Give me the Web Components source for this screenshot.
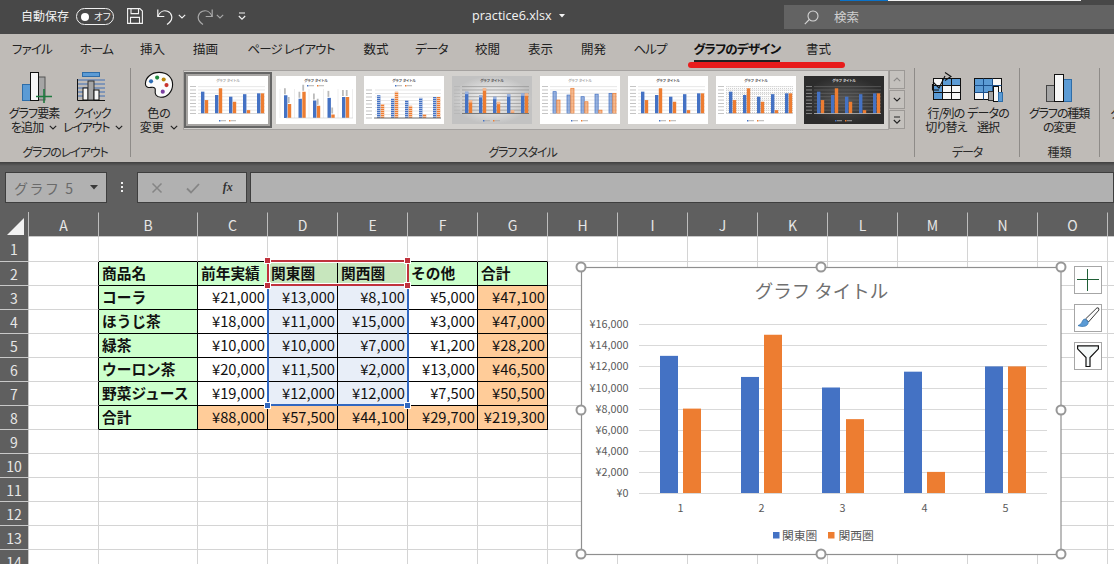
<!DOCTYPE html>
<html lang="ja">
<head>
<meta charset="utf-8">
<title>practice6.xlsx</title>
<style>
  html, body { margin: 0; width: 1114px; height: 564px; overflow: hidden; background: #fff; }
  body { font-family: "Noto Sans CJK JP", "Noto Sans", sans-serif; }
  svg { display: block; }
</style>
</head>
<body>
<xl-titlebar></xl-titlebar>
<xl-ribbon>
  <xl-group label="グラフのレイアウト" w="131" pad="5">
    <xl-rbtn w="58" ls="-.9" chev>
      <svg slot="icon" style="margin-left:6px" width="32" height="32" viewBox="0 0 32 32"><rect x="1.500" y="13.500" width="8" height="16" fill="#5b9bd5" stroke="#2e6da8"/><rect x="16" y="6" width="8" height="23" fill="#a5a5a5" stroke="#555"/><rect x="9.500" y="1.500" width="8" height="28" fill="#f7f7f7" stroke="#111"/><path d="M15 25.500h16M23 18v15" stroke="#1f7a3f" stroke-width="1.600" fill="none"/></svg>
      グラフ要素<br>を追加
    </xl-rbtn>
    <xl-rbtn w="58" ls="-1.200" chev>
      <svg slot="icon" width="32" height="32" viewBox="0 0 32 32"><rect x="6.500" y="1.500" width="17" height="4" fill="#5b9bd5" stroke="#2e6da8"/><path d="M2 9h27M2 13h27M2 17h27M2 21h27M2 25h27" stroke="#3f6fb5" fill="none"/><path d="M1.500 8v21.500H29" stroke="#111" fill="none"/><rect x="7" y="17" width="5" height="12" fill="#f7f7f7" stroke="#111"/><rect x="12" y="10" width="6" height="19" fill="#a5a5a5" stroke="#333"/><rect x="18" y="19" width="5" height="10" fill="#f7f7f7" stroke="#111"/></svg>
      クイック<br>レイアウト
    </xl-rbtn>
  </xl-group>
  <xl-group label="グラフ スタイル" w="784" pad="4">
    <xl-rbtn w="48" ls="0" chev>
      <svg slot="icon" width="30" height="30" viewBox="0 0 32 32"><path d="M16 1.500C8 1.500 1.500 7 1.500 13.500c0 3.500 3 4.500 6 4 3.500-.6 5 .7 4.500 3.500-.5 3 .5 7 6 7 7 0 12.500-6 12.500-13.500S25 1.500 16 1.500z" fill="#fbfbfb" stroke="#111" stroke-width="1.200"/><circle cx="7.500" cy="11" r="2.200" fill="#2e6db5"/><circle cx="14" cy="7" r="2.200" fill="#1e8a3c"/><circle cx="21" cy="9" r="2.200" fill="#b8860b"/><circle cx="24" cy="15" r="2.200" fill="#c8322b"/><circle cx="20" cy="22" r="2.200" fill="#7b3fa0"/></svg>
      色の<br>変更
    </xl-rbtn>
    <xl-gallery></xl-gallery>
  </xl-group>
  <xl-group label="データ" w="105" pad="10">
    <xl-rbtn w="42" ls="-.8">
      <svg slot="icon" width="32" height="32" viewBox="0 0 32 32"><rect x="3.500" y="7.500" width="27" height="21" fill="#f7f7f7" stroke="#111"/><path d="M12 8h18v7H12zM4 15h8v13H4z" fill="#5b9bd5"/><path d="M3.500 14.500h27M3.500 21.500h27M12.500 7.500v21M21.500 7.500v21" stroke="#111" fill="none"/><path d="M3 11l6 6 6-12M15 1.500l6 4-6 4M9 19H2.500v-6" fill="none" stroke="#111" stroke-width="1.100"/></svg>
      行/列の<br>切り替え
    </xl-rbtn>
    <xl-rbtn w="42" ls="-.9">
      <svg slot="icon" width="32" height="32" viewBox="0 0 32 32"><rect x="2.500" y="7.500" width="27" height="21" fill="#f7f7f7" stroke="#111"/><path d="M3 8h18v14H3z" fill="#5b9bd5"/><path d="M2.500 14.500h27M2.500 21.500h27M11.500 7.500v21M20.500 7.500v21" stroke="#1c4f8a" fill="none"/><rect x="16.500" y="20.500" width="5" height="9" fill="#a5a5a5" stroke="#333"/><rect x="21.500" y="15.500" width="5" height="15" fill="#f7f7f7" stroke="#111"/><rect x="26.500" y="21.500" width="4" height="9" fill="#5b9bd5" stroke="#2e6da8"/></svg>
      データの<br>選択
    </xl-rbtn>
  </xl-group>
  <xl-group label="種類" w="80" pad="3">
    <xl-rbtn w="72" ls="-1.100">
      <svg slot="icon" width="32" height="32" viewBox="0 0 32 32"><rect x="3.500" y="14.500" width="8" height="16" fill="#a5a5a5" stroke="#444"/><rect x="20.500" y="8.500" width="8" height="22" fill="#5b9bd5" stroke="#2e6da8"/><rect x="11.500" y="3.500" width="9" height="27" fill="#f7f7f7" stroke="#111"/></svg>
      グラフの種類<br>の変更
    </xl-rbtn>
  </xl-group>
  <xl-group label="" w="60" pad="5" last>
    <xl-rbtn w="50" ls="-.9">
      <svg slot="icon" width="32" height="32" viewBox="0 0 32 32"></svg>
      グラフの<br>移動
    </xl-rbtn>
  </xl-group>
</xl-ribbon>
<xl-formula></xl-formula>
<xl-sheet><xl-chart></xl-chart></xl-sheet>

<script>
var JP = '"Noto Sans CJK JP","Noto Sans",sans-serif';
var DATA = [[13, 8], [11, 15], [10, 7], [11.5, 2], [12, 12]];

function chev(color) {
  return '<svg class="chev" width="8" height="5" viewBox="0 0 8 5"><path d="M.8.8L4 4l3.200-3.200" fill="none" stroke="' + (color || '#222') + '" stroke-width="1.100"/></svg>';
}

class XlTitlebar extends HTMLElement {
  constructor() {
    super();
    this.attachShadow({ mode: 'open' }).innerHTML = `
    <style>
      :host { display: flex; align-items: center; height: 34px; background: #484848; color: #f4f4f4; font: 12.500px ${JP}; font-feature-settings: "palt"; position: relative; overflow: hidden; }
      .auto { margin: -3px 0 0 21px; width: 55px; white-space: nowrap; font-size: 12px; }
      .toggle { width: 38px; height: 17px; box-sizing: border-box; border: 1.500px solid #f0f0f0; border-radius: 9px; display: flex; align-items: center; padding-left: 4px; gap: 5px; font-size: 9.500px; line-height: 1; margin-top: -1px; }
      .toggle i { width: 8px; height: 8px; border-radius: 50%; background: #fff; }
      .qat { display: flex; align-items: center; margin-top: -2px; }
      .file { font: 12.600px "Open Sans", sans-serif; display: flex; align-items: center; gap: 7px; margin: -3px 0 0 226px; }
      .search { margin-left: auto; width: 330px; height: 24px; background: #636363; display: flex; align-items: center; color: #d0d0d0; }
      .search span { margin: -2px 0 0 15px; }
      .bar { position: absolute; top: 0; left: 840px; width: 241px; height: 1px; background: linear-gradient(90deg, #0a72c8 48px, #f2f2f2 48px); }
    </style>
    <div class="auto">自動保存</div>
    <div class="toggle"><i></i><span>オフ</span></div>
    <div class="qat">
      <svg style="margin-left:13px" width="16" height="16" viewBox="0 0 16 16" fill="none" stroke="#f4f4f4" stroke-width="1.100"><path d="M.6.6h12.300l2.500 2.500v12.300H.6z"/><path d="M4 .6v5h7.500v-5M3.500 15.400v-6h9v6"/></svg>
      <svg style="margin-left:14px" width="16" height="17" viewBox="0 0 16 17" fill="none" stroke="#f4f4f4" stroke-width="1.200"><path d="M.8 1.500v7h6.500"/><path d="M.8 8.500C3 3.500 7 2 10.500 3.300c4.500 1.700 5.500 7 2.800 10.200-.9 1.100-2 2-3.300 2.900"/></svg>
      <svg style="margin-left:5px" width="8" height="5" viewBox="0 0 8 5"><path d="M.8.8L4 4l3.200-3.200" fill="none" stroke="#f4f4f4" stroke-width="1.100"/></svg>
      <svg style="margin-left:11px" width="16" height="17" viewBox="0 0 16 17" fill="none" stroke="#a9a9a9" stroke-width="1.200"><path d="M15.200 1.500v7H8.700"/><path d="M15.200 8.500C13 3.500 9 2 5.500 3.300 1 5 0 10.300 2.700 13.500c.9 1.100 2 2 3.300 2.900"/></svg>
      <svg style="margin-left:3px" width="8" height="5" viewBox="0 0 8 5"><path d="M.8.8L4 4l3.200-3.200" fill="none" stroke="#a9a9a9" stroke-width="1.100"/></svg>
      <svg style="margin-left:14px" width="8" height="8" viewBox="0 0 8 8"><path d="M1 1h6" stroke="#f4f4f4" fill="none"/><path d="M.8 4L4 7.200 7.200 4" fill="none" stroke="#f4f4f4" stroke-width="1.100"/></svg>
    </div>
    <div class="file">practice6.xlsx<svg width="6" height="4" viewBox="0 0 6 4"><path d="M0 0h6L3 3.500z" fill="#f4f4f4"/></svg></div>
    <div class="search">
      <svg style="margin-left:20px" width="15" height="15" viewBox="0 0 15 15" fill="none" stroke="#d4d4d4" stroke-width="1.100"><circle cx="9" cy="6" r="5"/><path d="M5.300 9.500L.8 14.200"/></svg>
      <span>検索</span>
    </div>
    <div class="bar"></div>`;
  }
}

class XlRibbon extends HTMLElement {
  constructor() {
    super();
    var tabs = [['ファイル', 64, 1], ['ホーム', 65, 1], ['挿入', 47], ['描画', 59], ['ページ レイアウト', 112, 1], ['数式', 58], ['データ', 53, 1], ['校閲', 59], ['表示', 47], ['開発', 59], ['ヘルプ', 54, 1], ['グラフのデザイン', 120, 1], ['書式', 43]];
    var html = tabs.map(function (t) {
      return '<span class="tab' + (t[0] === 'グラフのデザイン' ? ' on' : '') + (t[2] ? ' kana' : '') + '" style="width:' + t[1] + 'px">' + t[0] + '</span>';
    }).join('');
    this.attachShadow({ mode: 'open' }).innerHTML = `
    <style>
      :host { display: block; height: 128px; background: #bfbbb7; color: #222; font: 12.500px ${JP}; font-feature-settings: "palt"; position: relative; }
      .tabs { display: flex; height: 34px; white-space: nowrap; }
      .tab { display: flex; justify-content: center; align-items: center; height: 28px; padding-top: 1px; box-sizing: border-box; position: relative; flex: none; }
      .kana { letter-spacing: -.8px; }
      .tab.on { font-weight: 700; color: #111; letter-spacing: -.8px; }
      .tab.on::after { content: ""; position: absolute; left: 17px; right: 17px; top: 26px; height: 2px; background: #222; }
      .body { display: flex; height: 94px; }
      .mark { position: absolute; left: 688px; top: 28px; width: 157px; height: 6px; border-radius: 3px; background: #e81c1c; }
    </style>
    <div class="tabs">${html}</div>
    <div class="body"><slot></slot></div>
    <div class="mark"></div>`;
  }
}

class XlGroup extends HTMLElement {
  constructor() {
    super();
    var w = this.getAttribute('w'), pad = this.getAttribute('pad');
    var last = this.hasAttribute('last');
    var label = this.getAttribute('label');
    var ls = /[ァ-ヶー]/.test(label) ? '-1.100px' : '0';
    this.attachShadow({ mode: 'open' }).innerHTML = `
    <style>
      :host { display: flex; flex-direction: column; box-sizing: border-box; width: ${w}px; height: 89px; flex: none; ${last ? '' : 'border-right: 1px solid #8e8b88;'} position: relative; }
      .in { display: flex; align-items: flex-start; flex: 1; padding-left: ${pad}px; }
      .lab { text-align: center; font-size: 12px; line-height: 16px; color: #2a2a2a; margin-bottom: -3px; letter-spacing: ${ls}; }
    </style>
    <div class="in"><slot></slot></div>
    <div class="lab">${label}</div>`;
  }
}

class XlRbtn extends HTMLElement {
  constructor() {
    super();
    var w = this.getAttribute('w');
    var ls = this.getAttribute('ls') || '0';
    this.attachShadow({ mode: 'open' }).innerHTML = `
    <style>
      :host { display: block; width: ${w}px; flex: none; text-align: center; font-size: 12px; line-height: 14px; letter-spacing: ${ls}px; color: #222; white-space: nowrap; }
      .ic { height: 35px; display: flex; justify-content: center; padding-top: 3px; }
      .chev { display: inline-block; margin-left: 4px; vertical-align: 2px; }
    </style>
    <div class="ic"><slot name="icon"></slot></div>
    <div><slot></slot>${this.hasAttribute('chev') ? chev() : ''}</div>`;
  }
}

class XlGallery extends HTMLElement {
  constructor() {
    super();
    var thumbs = '';
    for (var i = 1; i <= 8; i++) thumbs += '<xl-thumb v="' + i + '"' + (i === 1 ? ' sel' : '') + '></xl-thumb>';
    this.attachShadow({ mode: 'open' }).innerHTML = `
    <style>
      :host { display: flex; flex: none; height: 60px; margin-top: 2px; }
      .list { display: flex; padding: 1px 0 0 0; width: 706px; box-sizing: border-box; background: #d3d1ce; border: 1px solid #a5a2a0; height: 60px; }
      .sb { display: flex; flex-direction: column; width: 16px; }
      .sb div { flex: 1; box-sizing: border-box; border: 1px solid #9c9996; display: flex; align-items: center; justify-content: center; background: #c4c1bd; margin-bottom: 1px; }
    </style>
    <div class="list">${thumbs}</div>
    <div class="sb">
      <div><svg width="8" height="5" viewBox="0 0 8 5"><path d="M.8 4.200L4 1l3.200 3.200" fill="none" stroke="#8a8886" stroke-width="1.100"/></svg></div>
      <div><svg width="8" height="5" viewBox="0 0 8 5"><path d="M.8.8L4 4l3.200-3.200" fill="none" stroke="#222" stroke-width="1.100"/></svg></div>
      <div><svg width="8" height="8" viewBox="0 0 8 8"><path d="M1 1h6" stroke="#222" fill="none"/><path d="M.8 4L4 7.200 7.200 4" fill="none" stroke="#222" stroke-width="1.100"/></svg></div>
    </div>`;
  }
}

class XlThumb extends HTMLElement {
  constructor() {
    super();
    var v = +this.getAttribute('v');
    var sel = this.hasAttribute('sel');
    this.attachShadow({ mode: 'open' }).innerHTML = `
    <style>
      :host { display: block; width: 88px; height: 56px; box-sizing: border-box; padding: ${sel ? 2 : 4}px; flex: none; ${sel ? 'border: 2px solid #666; background: #a7a5a3;' : ''} }
      svg { display: block; width: 80px; height: 48px; }
    </style>` + this.draw(v);
  }
  draw(v) {
    var dark = v === 8, s = '';
    var blue = '#4472c4', or = '#ed7d31';
    var bg = dark ? 'url(#dk)' : v === 4 ? 'url(#gr)' : '#fff';
    s += '<defs><radialGradient id="dk"><stop offset="0" stop-color="#555"/><stop offset="1" stop-color="#2c2c2c"/></radialGradient>' +
      '<radialGradient id="gr"><stop offset="0" stop-color="#fff"/><stop offset="1" stop-color="#c2c2c2"/></radialGradient>' +
      '<pattern id="st" width="2" height="2" patternUnits="userSpaceOnUse"><rect width="2" height="1" fill="#fff" opacity=".55"/></pattern>' +
      '<pattern id="ht" width="2" height="2" patternUnits="userSpaceOnUse"><rect width="1" height="1" fill="#cfcfcf"/></pattern></defs>';
    s += '<rect width="80" height="48" fill="' + bg + '"/>';
    var base = v === 2 || v === 3 ? 42 : 37.5;
    var unit = v === 2 || v === 3 ? 1.75 : 1.68;
    var x0 = v === 2 ? 8 : 13, step = v === 2 ? 14.5 : 14;
    var tc = dark ? '#ddd' : v === 1 || v === 5 ? '#aaa' : '#555';
    s += '<text x="40" y="6" text-anchor="middle" font-size="3.600" font-weight="700" fill="' + tc + '" font-family=\'' + JP.replace(/"/g, '') + '\'>グラフ タイトル</text>';
    if (v === 7) s += '<rect x="10" y="9" width="68" height="29" fill="url(#ht)"/>';
    if (v === 2) {
      for (var k = 0; k <= 5; k++) s += '<path d="M' + (4 + k * 14.5) + ' 13v29" stroke="#ddd" stroke-width=".5"/>';
    } else {
      for (var g = 0; g <= 8; g++) {
        var y = base - g * 2 * unit;
        s += '<path d="M' + (v === 3 ? 11 : 10) + ' ' + y + 'H77" stroke="' + (dark ? '#666' : v === 4 ? '#8f8f8f' : '#ddd') + '" stroke-width=".7"/>';
        s += '<rect x="2" y="' + (y - .4) + '" width="6" height=".8" fill="' + (dark ? '#999' : '#b5b5b5') + '"/>';
      }
    }
    DATA.forEach(function (d, i) {
      var x = x0 + i * step;
      d.forEach(function (val, j) {
        var h = val * unit, bx = x + j * 3.8, c = j ? or : blue;
        if (v === 5) {
          s += '<rect x="' + bx + '" y="' + (base - h) + '" width="3.200" height="' + h + '" fill="' + c + '" fill-opacity=".55" stroke="' + c + '" stroke-width=".7"/>';
        } else {
          s += '<rect x="' + bx + '" y="' + (base - h) + '" width="3.400" height="' + h + '" fill="' + c + '"/>';
          if (v === 3) s += '<rect x="' + bx + '" y="' + (base - h) + '" width="3.400" height="' + h + '" fill="url(#st)"/>';
          if (v === 4) s += '<rect x="' + bx + '" y="' + (base - h) + '" width="3.400" height="2.500" fill="#fff" opacity=".45"/>';
          if (v === 2) s += '<rect x="' + bx + '" y="' + (base - h - 7) + '" width="1.800" height="6" fill="#bbb"/>';
        }
      });
    });
    s += '<path d="M10 ' + base + 'H77" stroke="' + (v === 3 || v === 4 ? '#777' : '#ccc') + '" stroke-width="' + (v === 3 || v === 4 ? 1 : .6) + '"/>';
    var ly = v === 2 || v === 3 ? 10 : 45;
    s += '<rect x="31" y="' + (ly - 1) + '" width="1.500" height="1.500" fill="' + blue + '"/><rect x="33" y="' + (ly - .7) + '" width="5" height=".9" fill="#aaa"/>';
    s += '<rect x="41" y="' + (ly - 1) + '" width="1.500" height="1.500" fill="' + or + '"/><rect x="43" y="' + (ly - .7) + '" width="5" height=".9" fill="#aaa"/>';
    return '<svg viewBox="0 0 80 48">' + s + '</svg>';
  }
}

class XlFormula extends HTMLElement {
  constructor() {
    super();
    this.attachShadow({ mode: 'open' }).innerHTML = `
    <style>
      :host { display: flex; align-items: flex-start; height: 50px; box-sizing: border-box; padding: 10px 0 0 5px; background: linear-gradient(#3f3f3f, #5f5f5f 4px); font: 14px ${JP}; }
      .box { background: #b1b1b1; border: 1px solid #3e3e3e; height: 31px; box-sizing: border-box; display: flex; align-items: center; }
      .name { width: 102px; padding: 0 8px 0 8px; justify-content: space-between; color: #6a6a6a; font-size: 14px; letter-spacing: 1.500px; }
      .dots { width: 30px; display: flex; justify-content: center; padding-top: 10px; }
      .btns { width: 110px; justify-content: space-around; padding: 0 2px; color: #333; font: italic 700 12px "Liberation Serif", serif; }
      .fx { flex: 1; margin-left: 3px; }
    </style>
    <div class="box name"><span>グラフ 5</span><svg width="8" height="5" viewBox="0 0 8 5"><path d="M0 0h8L4 4.500z" fill="#3a3a3a"/></svg></div>
    <div class="dots"><svg width="2" height="10" viewBox="0 0 2 10"><path d="M0 0h2v2H0zM0 4h2v2H0zM0 8h2v2H0z" fill="#eee"/></svg></div>
    <div class="box btns">
      <svg width="12" height="12" viewBox="0 0 12 12"><path d="M1.500 1.500l9 9M10.500 1.500l-9 9" stroke="#858585" stroke-width="1.500"/></svg>
      <svg width="14" height="12" viewBox="0 0 14 12"><path d="M1 6.500l4 4L13 2" fill="none" stroke="#858585" stroke-width="1.800"/></svg>
      <span>fx</span>
    </div>
    <div class="box fx"></div>`;
  }
}

class XlSheet extends HTMLElement {
  constructor() {
    super();
    var cols = 'ABCDEFGHIJKLMNO'.split('').concat(['']);
    var rows = {
      2: ['商品名', '前年実績', '関東圏', '関西圏', 'その他', '合計'],
      3: ['コーラ', '¥21,000', '¥13,000', '¥8,100', '¥5,000', '¥47,100'],
      4: ['ほうじ茶', '¥18,000', '¥11,000', '¥15,000', '¥3,000', '¥47,000'],
      5: ['緑茶', '¥10,000', '¥10,000', '¥7,000', '¥1,200', '¥28,200'],
      6: ['ウーロン茶', '¥20,000', '¥11,500', '¥2,000', '¥13,000', '¥46,500'],
      7: ['野菜ジュース', '¥19,000', '¥12,000', '¥12,000', '¥7,500', '¥50,500'],
      8: ['合計', '¥88,000', '¥57,500', '¥44,100', '¥29,700', '¥219,300']
    };
    var html = '<div class="corner"><svg width="17" height="17" viewBox="0 0 17 17"><path d="M17 0v17H0z" fill="#f2f2f2"/></svg></div>';
    cols.forEach(function (c) { html += '<div class="ch">' + c + '</div>'; });
    for (var r = 1; r <= 14; r++) {
      html += '<div class="rh">' + r + '</div>';
      for (var c = 0; c < cols.length; c++) {
        var cls = 'c', txt = '', inT = rows[r] && c >= 1 && c <= 6;
        if (r === 1 && c >= 1 && c <= 6) cls += ' bb';
        if (rows[r] && c === 0) cls += ' br';
        if (inT) {
          cls += ' bb br';
          txt = rows[r][c - 1];
          if (r === 2) cls += (c === 3 || c === 4) ? ' sh' : ' hd';
          else if (c === 1) cls += ' hd';
          else if (r === 8 || c === 6) cls += ' to';
          else if (c === 3 || c === 4) cls += ' se';
          cls += (r === 2 || c === 1) ? ' b' : ' n';
        }
        html += '<div class="' + cls + '">' + txt + '</div>';
      }
    }
    var hs = [[267.7, 48.5, 'r'], [407.7, 48.5, 'r'], [267.7, 73, 'r'], [407.7, 73, 'r'], [267.7, 193.5, 'u'], [407.7, 193.5, 'u']]
      .map(function (h) { return '<i class="hd-' + h[2] + '" style="left:' + (h[0] - 3.5) + 'px;top:' + (h[1] - 3.5) + 'px"></i>'; }).join('');
    this.attachShadow({ mode: 'open' }).innerHTML = `
    <style>
      :host { display: block; position: relative; height: 352px; overflow: hidden; font: 14.700px ${JP}; color: #111; background: #fff; }
      .g { display: grid; grid-template-columns: 29px 70px 99px repeat(14, 70px); grid-template-rows: 25px 25px repeat(13, 24px); width: 1200px; }
      .corner { background: #5f5f5f; display: flex; align-items: flex-end; justify-content: flex-end; padding: 0 4px 2px 0; border-right: 1px solid #bdbdbd; box-sizing: border-box; }
      .ch { background: #5f5f5f; color: #e6e6e6; font-size: 14px; display: flex; align-items: center; justify-content: center; border-right: 1px solid #bdbdbd; border-top: 1px solid #5f5f5f; border-bottom: 1px solid #c8c8c8; box-sizing: border-box; }
      .rh { background: #5f5f5f; color: #e6e6e6; font-size: 14px; display: flex; align-items: center; justify-content: center; border-bottom: 1px solid #c8c8c8; border-right: 1px solid #c8c8c8; box-sizing: border-box; }
      .c { box-sizing: border-box; border-right: 1px solid #d4d4d4; border-bottom: 1px solid #d4d4d4; display: flex; align-items: center; white-space: nowrap; line-height: 1; overflow: hidden; }
      .bb { border-bottom-color: #000; }
      .br { border-right-color: #000; }
      .hd { background: #ccffcc; }
      .sh { background: #c7e6bd; }
      .se { background: #e8eef8; }
      .to { background: #ffcc99; }
      .b { font-weight: 700; padding-left: 3px; }
      .n { justify-content: flex-end; padding-right: 2px; }
      .sel { position: absolute; box-sizing: border-box; outline: 1px solid #fff; outline-offset: -3px; }
      .red { left: 267px; top: 48px; width: 142px; height: 26px; border: 2px solid #c0323d; }
      .blu { left: 267px; top: 74px; width: 142px; height: 120px; border: 2px solid #3268c0; border-top: 0; outline: 0; }
      i { position: absolute; width: 7px; height: 7px; box-sizing: border-box; border: 1px solid #fff; }
      .hd-r { background: #c0323d; }
      .hd-u { background: #3268c0; }
    </style>
    <div class="g">${html}</div>
    <div class="sel red"></div>
    <div class="sel blu"></div>
    ${hs}
    <slot></slot>`;
  }
}

class XlChart extends HTMLElement {
  constructor() {
    super();
    this.attachShadow({ mode: 'open' }).innerHTML = `
    <style>
      :host { position: absolute; left: 570px; top: 43px; display: block; width: 544px; height: 309px; font-family: ${JP}; pointer-events: none; }
      svg { display: block; }
      .tools { position: absolute; left: 504px; top: 11px; display: flex; flex-direction: column; gap: 10px; }
      .tools div { width: 28px; height: 28px; box-sizing: border-box; background: #fff; border: 1px solid #a6a6a6; display: flex; align-items: center; justify-content: center; }
    </style>
    ${this.draw()}
    <div class="tools">
      <div><svg width="22" height="22" viewBox="0 0 22 22"><path d="M0 10.500h22M10.500 0v22" stroke="#1f5f36" stroke-width="1"/></svg></div>
      <div><svg width="24" height="22" viewBox="0 0 24 22"><path d="M22.500 1l-1.500-.2L9.500 12l3 3L23 3z" fill="#fbfbfb" stroke="#222" stroke-width=".9"/><path d="M9.300 12c-2.300 0-2.800 2-3.600 3.600-.6 1.200-2 2.300-3.700 3 3 1.300 8 1.300 9.500-1 .9-1.300 1-2.900.2-3.500z" fill="#5b9bd5" stroke="#2e6da8" stroke-width=".7"/></svg></div>
      <div><svg width="22" height="22" viewBox="0 0 22 22"><path d="M.6.8h20.800v3L13 12.500v9H9v-9L.6 3.800z" fill="#f4f8f8" stroke="#111" stroke-width="1.200"/></svg></div>
    </div>`;
  }
  draw() {
    var ox = 570, oy = 255;
    var s = '';
    var base = 493, unit = 10.55;
    for (var g = 0; g <= 8; g++) {
      var y = Math.round(base - g * 2 * unit) + .5;
      s += '<path d="M639 ' + y + 'H1047" stroke="#d9d9d9"/>';
      var lab = g === 0 ? '¥0' : '¥' + (g * 2) + ',000';
      s += '<text x="628.500" y="' + (y + 3.800) + '" text-anchor="end" font-size="10.800" fill="#595959">' + lab + '</text>';
    }
    var bx = [[660, 683], [741, 764], [822, 846], [904, 927], [985, 1008]];
    DATA.forEach(function (d, i) {
      s += '<rect x="' + bx[i][0] + '" y="' + (base - d[0] * unit) + '" width="18" height="' + (d[0] * unit) + '" fill="#4472c4"/>';
      s += '<rect x="' + bx[i][1] + '" y="' + (base - d[1] * unit) + '" width="18" height="' + (d[1] * unit) + '" fill="#ed7d31"/>';
      s += '<text x="' + (bx[i][0] + 20.500) + '" y="512" text-anchor="middle" font-size="10.800" fill="#595959">' + (i + 1) + '</text>';
    });
    s += '<text x="821.500" y="298" text-anchor="middle" font-size="18.500" fill="#707070">グラフ タイトル</text>';
    s += '<rect x="773" y="532" width="6.500" height="6.500" fill="#4472c4"/><text x="782" y="539.500" font-size="11.800" fill="#595959">関東圏</text>';
    s += '<rect x="828" y="532" width="6.500" height="6.500" fill="#ed7d31"/><text x="838.500" y="539.500" font-size="11.800" fill="#595959">関西圏</text>';
    s += '<rect x="581.500" y="267.500" width="479.500" height="287" fill="none" stroke="#8f8f8f" stroke-width="1.200"/>';
    [[581, 267], [821, 267], [1061, 267], [581, 410], [1061, 410], [581, 554], [821, 554], [1061, 554]].forEach(function (h) {
      s += '<circle cx="' + h[0] + '" cy="' + h[1] + '" r="4.500" fill="#fff" stroke="#979797" stroke-width="2"/>';
    });
    return '<svg width="544" height="309" viewBox="' + ox + ' ' + oy + ' 544 309"><rect x="581.500" y="267.500" width="479.500" height="287" fill="#fff"/>' + s + '</svg>';
  }
}

customElements.define('xl-titlebar', XlTitlebar);
customElements.define('xl-ribbon', XlRibbon);
customElements.define('xl-group', XlGroup);
customElements.define('xl-rbtn', XlRbtn);
customElements.define('xl-gallery', XlGallery);
customElements.define('xl-thumb', XlThumb);
customElements.define('xl-formula', XlFormula);
customElements.define('xl-sheet', XlSheet);
customElements.define('xl-chart', XlChart);
</script>
</body>
</html>
